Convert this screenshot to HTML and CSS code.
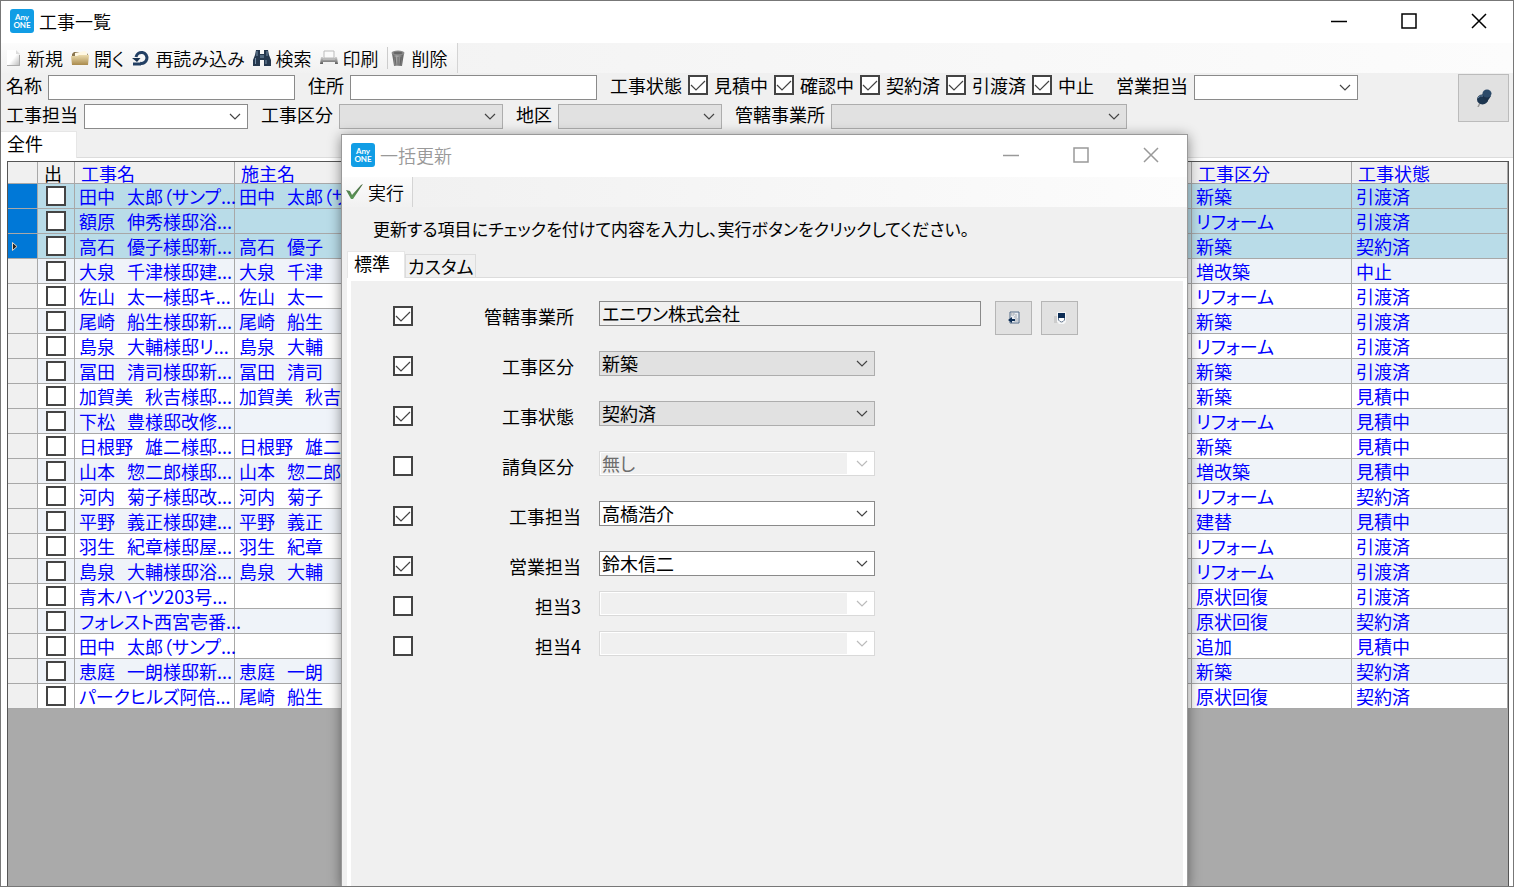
FILE: index.html
```html
<!DOCTYPE html>
<html lang="ja">
<head>
<meta charset="utf-8">
<title>工事一覧</title>
<link rel="stylesheet" href="styles.css">
</head>
<body>
<svg class="defs" aria-hidden="true">
  <defs>
    <linearGradient id="paper" x1="0" y1="0" x2="1" y2="1"><stop offset="0.5" stop-color="#fff"/><stop offset="1" stop-color="#b4b4b4"/></linearGradient>
    <linearGradient id="gold" x1="0" y1="0" x2="0" y2="1"><stop offset="0" stop-color="#ecdcae"/><stop offset="1" stop-color="#a98a4c"/></linearGradient>
    <linearGradient id="steel" x1="0" y1="0" x2="0" y2="1"><stop offset="0" stop-color="#d4d4d4"/><stop offset="1" stop-color="#5c5c5c"/></linearGradient>
    <linearGradient id="bin" x1="0" y1="0" x2="1" y2="0"><stop offset="0" stop-color="#555"/><stop offset="0.4" stop-color="#a8a8a8"/><stop offset="1" stop-color="#5a5a5a"/></linearGradient>
    <linearGradient id="leaf" x1="0" y1="0" x2="0" y2="1"><stop offset="0" stop-color="#4c6b45"/><stop offset="1" stop-color="#5c9a58"/></linearGradient>
  </defs>
</svg>
<main class="window">
  <header class="titlebar">
    <span class="logo"><span>Any</span><span>ONE</span></span>
    <h1 class="title">工事一覧</h1>
    <div class="caption">
      <button type="button" aria-label="最小化"><svg viewBox="0 0 16 16"><path d="M0 8.500h16"/></svg></button>
      <button type="button" aria-label="最大化"><svg viewBox="0 0 16 16"><path d="M1 1h14v14H1z"/></svg></button>
      <button type="button" aria-label="閉じる"><svg viewBox="0 0 16 16"><path d="M1 1l14 14M15 1L1 15"/></svg></button>
    </div>
  </header>

  <nav class="toolbar">
    <div class="strip">
      <button type="button" class="tool"><svg viewBox="0 0 18 18"><path d="M3 1h9l4 4v12H3z" fill="url(#paper)"/><path d="M12 1v4h4" fill="#ddd"/><path d="M15.500 6v10.500H3" fill="none" stroke="#aaa"/></svg>新規</button>
      <button type="button" class="tool"><svg viewBox="0 0 18 18"><path d="M1 5l2-2h4l2 1h7l1 2v9H1z" fill="#8b7750"/><path d="M4 4l10-2 2 2v6H4z" fill="#fff8e4"/><path d="M0 7h6l2-1h10l-1 10H1z" fill="url(#gold)"/></svg>開く</button>
      <button type="button" class="tool"><svg viewBox="0 0 18 18"><path d="M4 8a5.500 5.500 0 1 1 4 6.200" fill="none" stroke="#223f63" stroke-width="3"/><path d="M0 9h8.500L5 13z" fill="#16304f"/><path d="M1 15h8" stroke="#223f63" stroke-width="3"/></svg>再読み込み</button>
      <button type="button" class="tool"><svg viewBox="0 0 18 18"><path d="M3 1h4v4h4V1h4l1 5 2 5v6h-7v-6H7v6H0v-6l2-5z" fill="#25384e"/><path d="M4 2v5M2.500 9v6M14 2v5M13 11v4" stroke="#7890a8"/><path d="M7 6h4v3H7z" fill="#536a80"/></svg>検索</button>
      <button type="button" class="tool"><svg viewBox="0 0 18 18"><path d="M4 2h10v7H4z" fill="#fafafa" stroke="#bbb"/><path d="M1 8h2v2h12V8h2l1 7H0z" fill="url(#steel)"/><path d="M3 9h12v2H3z" fill="#bbb"/><path d="M3 13h12v3H3z" fill="#f2f2f2"/></svg>印刷</button>
      <span class="sep"></span>
      <button type="button" class="tool"><svg viewBox="0 0 18 18"><path d="M3 4h12l-2 13H5z" fill="url(#bin)"/><ellipse cx="9" cy="4" rx="6.500" ry="2.500" fill="#8c8c8c"/><ellipse cx="9" cy="4" rx="4.500" ry="1.200" fill="#666"/><path d="M6 8l1 8M9 8v8M12 8l-1 8" stroke="#555" stroke-width=".7"/></svg>削除</button>
    </div>
  </nav>

  <form class="filters">
    <div class="filter-rows">
      <div class="filter-row">
        <div class="field"><label for="f-name">名称</label><input class="box w-text" id="f-name" type="text"></div>
        <div class="field"><label for="f-addr">住所</label><input class="box w-text" id="f-addr" type="text"></div>
        <div class="field states" role="group" aria-labelledby="st"><span id="st">工事状態</span>
          <label class="state"><input type="checkbox" class="check" checked>見積中</label>
          <label class="state"><input type="checkbox" class="check" checked>確認中</label>
          <label class="state"><input type="checkbox" class="check" checked>契約済</label>
          <label class="state"><input type="checkbox" class="check" checked>引渡済</label>
          <label class="state"><input type="checkbox" class="check" checked>中止</label>
        </div>
        <div class="field"><label for="f-sales">営業担当</label><select class="box combo w-combo" id="f-sales"><option></option></select></div>
      </div>
      <div class="filter-row">
        <div class="field"><label for="f-work">工事担当</label><select class="box combo w-combo" id="f-work"><option></option></select></div>
        <div class="field"><label for="f-kind">工事区分</label><select class="box combo list w-combo" id="f-kind"><option></option></select></div>
        <div class="field"><label for="f-area">地区</label><select class="box combo list w-combo" id="f-area"><option></option></select></div>
        <div class="field"><label for="f-office">管轄事業所</label><select class="box combo list w-wide" id="f-office"><option></option></select></div>
      </div>
    </div>
    <button type="button" class="pin" aria-label="固定"><svg viewBox="0 0 18 18"><path d="M5 14l-2 4" stroke="#999" stroke-width="1.500"/><ellipse cx="7.500" cy="10.500" rx="5.500" ry="5" fill="#1d3650"/><path d="M6 7l4-4 6 4-4 6z" fill="#1b314a"/><ellipse cx="12" cy="4.500" rx="4.500" ry="4" fill="#2c4a69"/><path d="M3 9q2-3 5-2" stroke="#6d8aa8" fill="none"/></svg></button>
  </form>

  <div class="tabs main-tabs" role="tablist"><button type="button" role="tab" aria-selected="true" class="tab active">全件</button></div>

  <section class="panel">
    <div class="grid">
      <table>
        <colgroup><col class="c-head"><col class="c-check"><col class="c-data"><col class="c-data"><col><col class="c-data"><col class="c-last"></colgroup>
        <thead><tr><th></th><th class="out">出</th><th>工事名</th><th>施主名</th><th></th><th>工事区分</th><th>工事状態</th></tr></thead>
        <tbody>
          <tr class="sel"><th></th><td><input type="checkbox" class="check" aria-label="出"></td><td>田中&emsp13;&emsp13;太郎（サンプ...</td><td>田中&emsp13;&emsp13;太郎（サ</td><td></td><td>新築</td><td>引渡済</td></tr>
          <tr class="sel"><th></th><td><input type="checkbox" class="check" aria-label="出"></td><td>額原&emsp13;&emsp13;伸秀様邸浴...</td><td></td><td></td><td>リフォーム</td><td>引渡済</td></tr>
          <tr class="sel"><th><svg class="marker" viewBox="0 0 6 9"><path d="M.5.5L5 4.500.5 8.500z"/></svg></th><td><input type="checkbox" class="check" aria-label="出"></td><td>高石&emsp13;&emsp13;優子様邸新...</td><td>高石&emsp13;&emsp13;優子</td><td></td><td>新築</td><td>契約済</td></tr>
          <tr><th></th><td><input type="checkbox" class="check" aria-label="出"></td><td>大泉&emsp13;&emsp13;千津様邸建...</td><td>大泉&emsp13;&emsp13;千津</td><td></td><td>増改築</td><td>中止</td></tr>
          <tr><th></th><td><input type="checkbox" class="check" aria-label="出"></td><td>佐山&emsp13;&emsp13;太一様邸キ...</td><td>佐山&emsp13;&emsp13;太一</td><td></td><td>リフォーム</td><td>引渡済</td></tr>
          <tr><th></th><td><input type="checkbox" class="check" aria-label="出"></td><td>尾崎&emsp13;&emsp13;船生様邸新...</td><td>尾崎&emsp13;&emsp13;船生</td><td></td><td>新築</td><td>引渡済</td></tr>
          <tr><th></th><td><input type="checkbox" class="check" aria-label="出"></td><td>島泉&emsp13;&emsp13;大輔様邸リ...</td><td>島泉&emsp13;&emsp13;大輔</td><td></td><td>リフォーム</td><td>引渡済</td></tr>
          <tr><th></th><td><input type="checkbox" class="check" aria-label="出"></td><td>冨田&emsp13;&emsp13;清司様邸新...</td><td>冨田&emsp13;&emsp13;清司</td><td></td><td>新築</td><td>引渡済</td></tr>
          <tr><th></th><td><input type="checkbox" class="check" aria-label="出"></td><td>加賀美&emsp13;&emsp13;秋吉様邸...</td><td>加賀美&emsp13;&emsp13;秋吉</td><td></td><td>新築</td><td>見積中</td></tr>
          <tr><th></th><td><input type="checkbox" class="check" aria-label="出"></td><td>下松&emsp13;&emsp13;豊様邸改修...</td><td></td><td></td><td>リフォーム</td><td>見積中</td></tr>
          <tr><th></th><td><input type="checkbox" class="check" aria-label="出"></td><td>日根野&emsp13;&emsp13;雄二様邸...</td><td>日根野&emsp13;&emsp13;雄二</td><td></td><td>新築</td><td>見積中</td></tr>
          <tr><th></th><td><input type="checkbox" class="check" aria-label="出"></td><td>山本&emsp13;&emsp13;惣二郎様邸...</td><td>山本&emsp13;&emsp13;惣二郎</td><td></td><td>増改築</td><td>見積中</td></tr>
          <tr><th></th><td><input type="checkbox" class="check" aria-label="出"></td><td>河内&emsp13;&emsp13;菊子様邸改...</td><td>河内&emsp13;&emsp13;菊子</td><td></td><td>リフォーム</td><td>契約済</td></tr>
          <tr><th></th><td><input type="checkbox" class="check" aria-label="出"></td><td>平野&emsp13;&emsp13;義正様邸建...</td><td>平野&emsp13;&emsp13;義正</td><td></td><td>建替</td><td>見積中</td></tr>
          <tr><th></th><td><input type="checkbox" class="check" aria-label="出"></td><td>羽生&emsp13;&emsp13;紀章様邸屋...</td><td>羽生&emsp13;&emsp13;紀章</td><td></td><td>リフォーム</td><td>引渡済</td></tr>
          <tr><th></th><td><input type="checkbox" class="check" aria-label="出"></td><td>島泉&emsp13;&emsp13;大輔様邸浴...</td><td>島泉&emsp13;&emsp13;大輔</td><td></td><td>リフォーム</td><td>引渡済</td></tr>
          <tr><th></th><td><input type="checkbox" class="check" aria-label="出"></td><td>青木ハイツ203号...</td><td></td><td></td><td>原状回復</td><td>引渡済</td></tr>
          <tr><th></th><td><input type="checkbox" class="check" aria-label="出"></td><td>フォレスト西宮壱番...</td><td></td><td></td><td>原状回復</td><td>契約済</td></tr>
          <tr><th></th><td><input type="checkbox" class="check" aria-label="出"></td><td>田中&emsp13;&emsp13;太郎（サンプ...</td><td></td><td></td><td>追加</td><td>見積中</td></tr>
          <tr><th></th><td><input type="checkbox" class="check" aria-label="出"></td><td>恵庭&emsp13;&emsp13;一朗様邸新...</td><td>恵庭&emsp13;&emsp13;一朗</td><td></td><td>新築</td><td>契約済</td></tr>
          <tr><th></th><td><input type="checkbox" class="check" aria-label="出"></td><td>パークヒルズ阿倍...</td><td>尾崎&emsp13;&emsp13;船生</td><td></td><td>原状回復</td><td>契約済</td></tr>
        </tbody>
      </table>
    </div>
  </section>

  <section class="dialog" role="dialog" aria-labelledby="dlg-title">
    <header class="titlebar">
      <span class="logo"><span>Any</span><span>ONE</span></span>
      <h2 class="title" id="dlg-title">一括更新</h2>
      <div class="caption">
        <button type="button" aria-label="最小化"><svg viewBox="0 0 16 16"><path d="M0 8.500h16"/></svg></button>
        <button type="button" aria-label="最大化"><svg viewBox="0 0 16 16"><path d="M1 1h14v14H1z"/></svg></button>
        <button type="button" aria-label="閉じる"><svg viewBox="0 0 16 16"><path d="M1 1l14 14M15 1L1 15"/></svg></button>
      </div>
    </header>
    <nav class="toolbar">
      <div class="strip"><button type="button" class="tool"><svg viewBox="0 0 18 18"><path d="M1 7l4 1 2 4 9-10 2-1-10 15H6z" fill="url(#leaf)"/></svg>実行</button></div>
    </nav>
    <p class="hint">更新する項目にチェックを付けて内容を入力し、実行ボタンをクリックしてください。</p>
    <div class="tabs" role="tablist">
      <button type="button" role="tab" aria-selected="true" class="tab active">標準</button>
      <button type="button" role="tab" aria-selected="false" class="tab">カスタム</button>
    </div>
    <form class="sheet">
      <div class="rows">
        <div class="row"><input type="checkbox" class="check" id="k1" checked><label for="k1" id="l1">管轄事業所</label>
          <input class="box w-office" type="text" value="エニワン株式会社" readonly aria-labelledby="l1">
          <button type="button" class="mini" aria-label="選択"><svg viewBox="0 0 12 14"><path d="M2 1h9v11H2z" fill="#e9edf2" stroke="#526a87"/><path d="M3 2h3v2H3zM7 4h2M6 6h3M7 8h3M6 10h4" fill="#fff" stroke="#a5abb3"/><path d="M0 9l4-3v2h3v2H4v2z" fill="#0d2d55"/></svg></button>
          <button type="button" class="mini" aria-label="クリア"><svg viewBox="0 0 12 14"><path d="M0 5h4v7H0z" fill="#ccc"/><path d="M3 1h9v10l-2 2H5l-2-2z" fill="#f6f7f8"/><path d="M4 2h7v5H4z" fill="#0d2d55"/><path d="M4.500 7v2q3 4 6 0V7" fill="#fff" stroke="#66788f"/></svg></button>
        </div>
        <div class="row"><input type="checkbox" class="check" id="k2" checked><label for="k2" id="l2">工事区分</label><select class="box combo list w-form" aria-labelledby="l2"><option>新築</option></select></div>
        <div class="row"><input type="checkbox" class="check" id="k3" checked><label for="k3" id="l3">工事状態</label><select class="box combo list w-form" aria-labelledby="l3"><option>契約済</option></select></div>
        <div class="row"><input type="checkbox" class="check" id="k4"><label for="k4" id="l4">請負区分</label><select class="box combo w-form" disabled aria-labelledby="l4"><option>無し</option></select></div>
        <div class="row person"><input type="checkbox" class="check" id="k5" checked><label for="k5" id="l5">工事担当</label><select class="box combo w-form" aria-labelledby="l5"><option>高橋浩介</option></select></div>
        <div class="row person"><input type="checkbox" class="check" id="k6" checked><label for="k6" id="l6">営業担当</label><select class="box combo w-form" aria-labelledby="l6"><option>鈴木信二</option></select></div>
      </div>
      <div class="rows tight">
        <div class="row person"><input type="checkbox" class="check" id="k7"><label for="k7" id="l7">担当3</label><select class="box combo w-form" disabled aria-labelledby="l7"><option></option></select></div>
        <div class="row person"><input type="checkbox" class="check" id="k8"><label for="k8" id="l8">担当4</label><select class="box combo w-form" disabled aria-labelledby="l8"><option></option></select></div>
      </div>
    </form>
  </section>
</main>
</body>
</html>
```
FILE: styles.css
```css
* { box-sizing: border-box; }

body {
  margin: 0;
  color: #000;
  font: 18px/20px "Noto Sans CJK JP", sans-serif;
  font-feature-settings: "palt";
}

button, input, select { font: inherit; font-feature-settings: inherit; color: inherit; margin: 0; border-radius: 0; }
button { border: 0; padding: 0; background: none; }
svg { display: block; }
.defs { position: absolute; width: 0; height: 0; }

.window {
  position: relative;
  display: flex;
  flex-direction: column;
  height: 100vh;
  border: 1px solid #777;
  background: #f0f0f0;
  overflow: hidden;
  white-space: nowrap;
}

/* Title bars */
.titlebar { display: flex; align-items: center; flex: none; height: 42px; padding: 0 26px 2px 9px; background: #fff; }
.logo {
  display: flex;
  flex-direction: column;
  align-items: center;
  justify-content: center;
  width: 24px;
  height: 24px;
  border-radius: 3px;
  background: #119de5;
  color: #fff;
  font: bold 8px/8px Lato, sans-serif;
}
.title { margin: 0 auto 0 5px; font-size: 18px; font-weight: 350; }
.caption { display: flex; gap: 54px; }
.caption svg { width: 16px; height: 16px; fill: none; stroke: #000; stroke-width: 1.500; }

/* Toolbars */
.toolbar { display: flex; flex: none; height: 30px; background: linear-gradient(90deg, #f0f0f0, #fcfcfc); }
.strip {
  display: flex;
  align-items: center;
  gap: 8px;
  padding: 0 9px 0 3px;
  border-right: 1px solid #d4d4d4;
  background: linear-gradient(#fcfcfc, #f1f1f1);
}
.tool { display: flex; align-items: center; gap: 5px; font-weight: 350; }
.tool svg { width: 18px; height: 18px; }
.sep { width: 1px; height: 22px; margin-right: -7px; background: #ccc; }

/* Shared controls */
.box { height: 25px; padding: 0 2px; border: 1px solid #8a8a8a; background: #fff; outline: 0; }
.combo {
  appearance: none;
  padding: 0 28px 2px 2px;
  background: #fff url("data:image/svg+xml,%3Csvg xmlns='http://www.w3.org/2000/svg' width='12' height='8'%3E%3Cpath d='M1 1l5 5 5-5' fill='none' stroke='%23444' stroke-width='1.200'/%3E%3C/svg%3E") no-repeat right 6px center;
}
.combo.list { background-color: #e1e1e1; border-color: #adadad; }
.combo:disabled {
  border-color: #d9d9d9;
  color: #6d6d6d;
  opacity: 1;
  background:
    url("data:image/svg+xml,%3Csvg xmlns='http://www.w3.org/2000/svg' width='12' height='8'%3E%3Cpath d='M1 1l5 5 5-5' fill='none' stroke='%23bbb' stroke-width='1.200'/%3E%3C/svg%3E") no-repeat right 6px center,
    linear-gradient(#f0f0f0, #f0f0f0) no-repeat 1px 1px / calc(100% - 28px) calc(100% - 2px),
    #fff;
}
.check { appearance: none; flex: none; width: 20px; height: 20px; border: 2px solid #444; background: #fff; }
.check:checked {
  background: #fff url("data:image/svg+xml,%3Csvg xmlns='http://www.w3.org/2000/svg' width='16' height='16'%3E%3Cpath d='M1 8l5 5 9-9' fill='none' stroke='%23444' stroke-width='1.200'/%3E%3C/svg%3E") no-repeat center;
}
.w-text { width: 247px; }
.w-combo { width: 164px; }
.w-wide { width: 296px; }
.w-form { width: 276px; }
.w-office { width: 382px; padding-bottom: 2px; background: #f0f0f0; }

/* Search filters */
.filters { display: flex; justify-content: space-between; flex: none; height: 58px; padding: 1px 4px 3px 5px; }
.filter-rows { display: flex; flex-direction: column; gap: 4px; padding-top: 1px; }
.filter-row { display: flex; gap: 13px; }
.field { display: flex; align-items: flex-start; gap: 6px; }
.state { display: flex; align-items: center; gap: 6px; }
.states { margin-right: 9px; }
.pin { display: grid; place-items: center; width: 51px; height: 48px; border: 1px solid #bbb; background: #e1e1e1; }
.pin svg { width: 18px; height: 18px; }

/* Tabs */
.tabs { display: flex; align-items: flex-end; flex: none; height: 27px; border-bottom: 1px solid #dcdcdc; }
.tab { height: 23px; padding: 0 2px; border: 1px solid #dcdcdc; border-bottom: 0; }
.tab.active { width: 58px; height: 27px; padding: 0 6px 4px; border-color: #e6e6e6; margin-bottom: -1px; background: #fff; text-align: left; }
.main-tabs .tab.active { width: 76px; border-left: 0; }

/* Project list */
.panel { flex: 1; min-height: 0; padding: 3px 4px 0 6px; background: #fff; }
.grid { height: 100%; overflow: hidden; border: 1px solid #555; border-bottom: 0; background: #aaa; }
table { width: 100%; table-layout: fixed; border-spacing: 0; color: #00f; }
.c-head { width: 30px; }
.c-check { width: 37px; }
.c-data { width: 160px; }
.c-last { width: 156px; }
th, td { padding: 0 0 0 4px; border-right: 1px solid #a8a8a8; border-bottom: 1px solid #a8a8a8; text-align: left; font-weight: 400; }
td { height: 25px; }
thead th { height: 22px; padding-left: 6px; background: #f0f0f0; }
th { background: #f0f0f0; }
.out { color: #000; }
tbody tr { background: #fff; }
tbody tr:nth-child(even) { background: #eff3f9; }
tbody tr.sel { background: #b9dce8; }
.sel th { background: #0078d7; }
td .check { display: block; margin-left: 4px; }
.marker { width: 6px; height: 9px; fill: #222; stroke: #e8d8c8; }

/* Bulk update dialog */
.dialog {
  position: absolute;
  top: 133px;
  bottom: -1px;
  left: 340px;
  display: flex;
  flex-direction: column;
  width: 847px;
  border: 1px solid #999;
  background: #f0f0f0;
  box-shadow: 0 2px 12px rgba(0, 0, 0, 0.45);
}
.dialog .titlebar { padding-right: 28px; color: #999; }
.dialog .caption svg { stroke: #999; }
.dialog .strip { padding-right: 8px; }
.hint { margin: 0; padding: 12px 0 12px 31px; font-size: 17px; }
.dialog .tabs { margin-left: 5px; }
.sheet { flex: 1; margin: 0 0 0 5px; padding: 20px 0 0 42px; border: 4px solid #fff; border-top-width: 3px; border-bottom: 0; }
.rows { display: flex; flex-direction: column; gap: 20px; }
.tight { gap: 10px; margin-top: 10px; }
.row { display: flex; align-items: center; height: 30px; }
.row label { width: 161px; margin-right: 25px; text-align: right; }
.person label { width: 168px; margin-right: 18px; }
.row .box { align-self: flex-start; }
.mini { display: grid; place-items: center; width: 37px; height: 34px; margin-left: 14px; border: 1px solid #b5b5b5; background: #e1e1e1; align-self: flex-start; }
.mini + .mini { margin-left: 9px; }
.mini svg { width: 12px; height: 14px; }
```
